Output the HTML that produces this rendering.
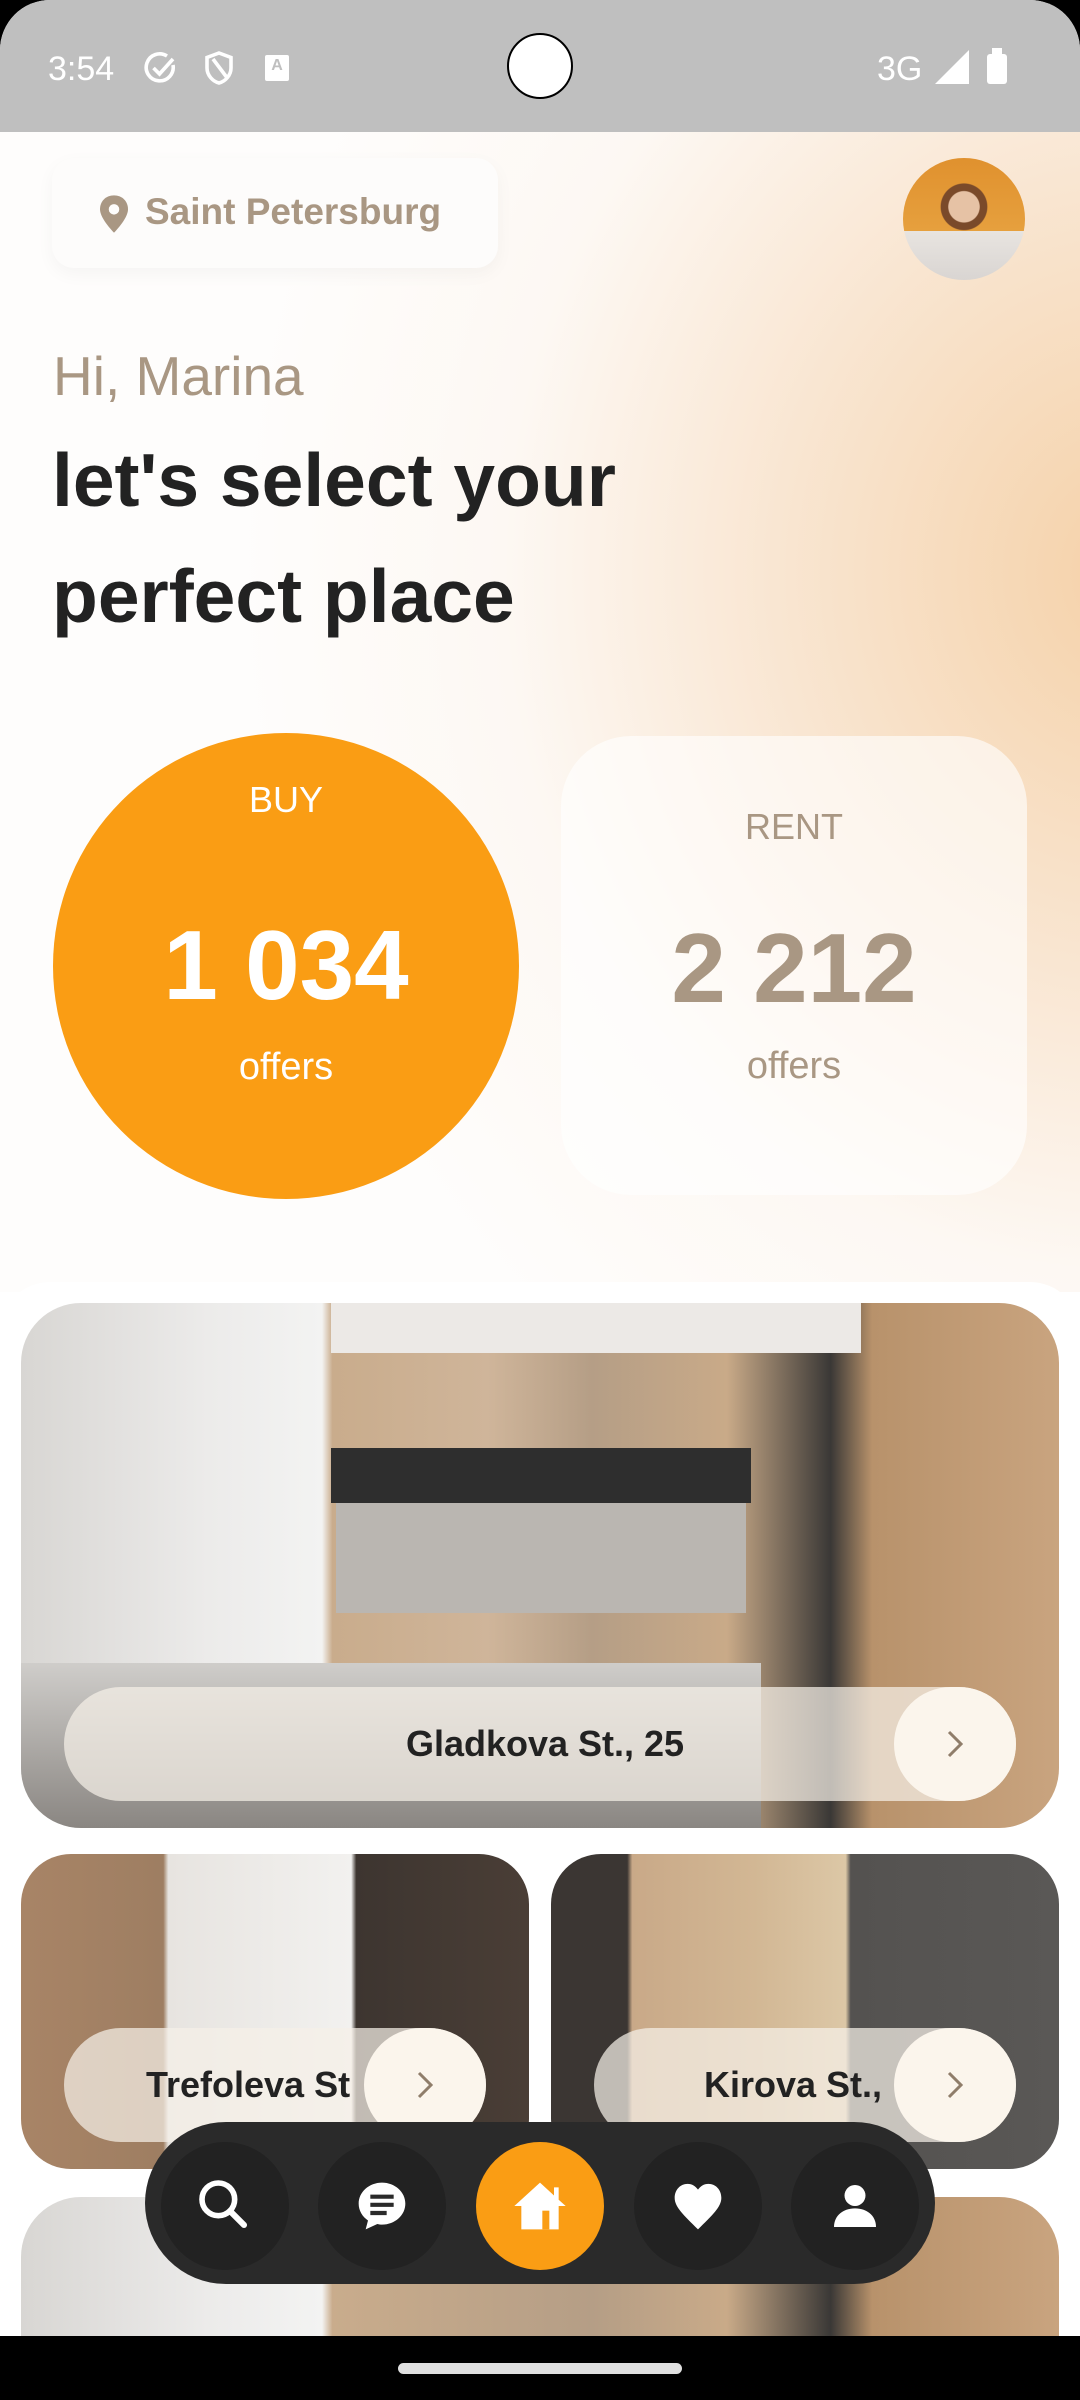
<!DOCTYPE html>
<html><head><meta charset="utf-8"><style>
*{margin:0;padding:0;box-sizing:border-box}
body{width:1080px;height:2400px;overflow:hidden;background:#000;font-family:"Liberation Sans",sans-serif;position:relative}
.screen{position:absolute;left:0;top:0;width:1080px;height:2400px;background:#fff;border-radius:50px 50px 0 0;overflow:hidden}
.status{position:absolute;left:0;top:0;width:1080px;height:132px;background:#bfbfbf;color:#fff}
.hero{position:absolute;left:0;top:132px;width:1080px;height:1160px;background:radial-gradient(ellipse 900px 1000px at 105% 38%,#f5d1a8 0,#f9e6d2 40%,#fdf8f3 70%,#fefdfc 100%)}
.abs{position:absolute}
.card{position:absolute;overflow:hidden}
.pill{position:absolute;background:rgba(245,240,232,.72);border-radius:60px}
.arrow{position:absolute;width:122px;height:114px;border-radius:57px;background:#fbf5ec}
.nb{position:absolute;width:128px;height:128px;border-radius:64px;background:#222;top:20px}
</style></head><body>
<div class="screen">
<div class="status">
 <div class="abs" style="left:48px;top:50px;font-size:34px">3:54</div>
 <svg class="abs" style="left:143px;top:50px" width="36" height="36" viewBox="0 0 24 24"><path d="M20 10a9 9 0 1 1-4-6" fill="none" stroke="#fff" stroke-width="2.4"/><path d="M7 12l4 4 9-10" fill="none" stroke="#fff" stroke-width="2.4"/></svg>
 <svg class="abs" style="left:203px;top:50px" width="32" height="36" viewBox="0 0 20 24"><path d="M10 2l8 3v7c0 5-4 9-8 10-4-1-8-5-8-10V5z M6 6l9 12" fill="none" stroke="#fff" stroke-width="2.4"/></svg>
 <div class="abs" style="left:265px;top:55px;width:24px;height:26px;background:#fff;border-radius:2px;color:#bfbfbf;font-size:16px;text-align:center;line-height:22px;font-weight:bold">A</div>
 <div class="abs" style="left:507px;top:33px;width:66px;height:66px;border-radius:50%;background:#fff;border:2px solid #000"></div>
 <div class="abs" style="left:877px;top:50px;font-size:34px">3G</div>
 <svg class="abs" style="left:935px;top:50px" width="34" height="34"><path d="M34 0V34H0z" fill="#fff"/></svg>
 <div class="abs" style="left:987px;top:54px;width:20px;height:30px;background:#fff;border-radius:3px"></div>
 <div class="abs" style="left:992px;top:48px;width:10px;height:8px;background:#fff"></div>
</div>
<div class="hero">
 <div class="abs" style="left:52px;top:26px;width:446px;height:110px;background:#fdfcfb;border-radius:22px;box-shadow:0 6px 18px rgba(0,0,0,.04)">
  <svg class="abs" style="left:48px;top:37px" width="28" height="38" viewBox="0 0 24 32"><path d="M12 0C5 0 0 5 0 12c0 8 12 20 12 20s12-12 12-20C24 5 19 0 12 0z" fill="#a99783"/><circle cx="12" cy="12" r="4.5" fill="#fdfcfb"/></svg>
  <div class="abs" style="left:93px;top:33px;font-size:37px;color:#a99783;font-weight:bold">Saint Petersburg</div>
 </div>
 <div class="abs" style="left:903px;top:26px;width:122px;height:122px;border-radius:50%;background:radial-gradient(circle at 50% 40%,#e6c2a5 0 16%,#7a4a2a 17% 24%,transparent 25%),linear-gradient(180deg,#e0912e 0,#e6a03e 60%,#e8e4e0 60%,#d9d5d2 100%)"></div>
 <div class="abs" style="left:53px;top:212px;font-size:55px;color:#a99783">Hi, Marina</div>
 <div class="abs" style="left:52px;top:290px;font-size:75px;line-height:116px;color:#222;font-weight:bold">let's select your<br>perfect place</div>
 <div class="abs" style="left:53px;top:601px;width:466px;height:466px;border-radius:50%;background:#fa9d14;color:#fff;text-align:center">
  <div style="margin-top:46px;font-size:36px">BUY</div>
  <div style="margin-top:88px;font-size:98px;font-weight:bold">1 034</div>
  <div style="margin-top:24px;font-size:38px">offers</div>
 </div>
 <div class="abs" style="left:561px;top:604px;width:466px;height:459px;border-radius:70px;background:rgba(255,255,255,.62);color:#a99783;text-align:center">
  <div style="margin-top:70px;font-size:36px">RENT</div>
  <div style="margin-top:64px;font-size:98px;font-weight:bold">2 212</div>
  <div style="margin-top:20px;font-size:38px">offers</div>
 </div>
</div>
<div class="abs" style="left:0;top:1282px;width:1080px;height:1100px;background:#fff;border-radius:50px 50px 0 0"></div>
<div class="card" style="left:21px;top:1303px;width:1038px;height:525px;border-radius:60px;background:linear-gradient(90deg,#d8d6d3 0,#ecebea 18%,#f3f3f2 29%,#c9ac8c 30%,#cfb59a 45%,#b59e86 55%,#c9aa88 68%,#3a3836 78%,#b8926b 82%,#c9a47f 100%)">
 <div class="abs" style="left:310px;top:0;width:530px;height:50px;background:#ece9e6"></div>
 <div class="abs" style="left:310px;top:145px;width:420px;height:55px;background:#2e2e2e"></div>
 <div class="abs" style="left:315px;top:200px;width:410px;height:110px;background:#bab6b1"></div>
 <div class="abs" style="left:0;top:360px;width:740px;height:165px;background:linear-gradient(180deg,#cfcdca,#8a8682)"></div>
 <div class="pill" style="left:43px;top:384px;width:952px;height:114px"></div>
 <div class="abs" style="left:43px;top:384px;width:952px;height:114px;line-height:114px;text-align:center;font-size:36px;font-weight:bold;color:#222;padding-left:10px">Gladkova St., 25</div>
 <div class="arrow" style="left:873px;top:384px"></div>
 <svg class="abs" style="left:920px;top:426px" width="28" height="30" viewBox="0 0 14 20"><path d="M3 2l8 8-8 8" fill="none" stroke="#8f7d6a" stroke-width="2"/></svg>
</div>
<div class="card" style="left:21px;top:1854px;width:508px;height:315px;border-radius:50px;background:linear-gradient(90deg,#a88466 0,#9e7e62 28%,#e7e4e0 29%,#f2f1ef 65%,#3d3530 66%,#4a3e36 100%)">
 <div class="pill" style="left:43px;top:174px;width:422px;height:114px"></div>
 <div class="abs" style="left:125px;top:174px;height:114px;line-height:114px;font-size:36px;font-weight:bold;color:#222;white-space:nowrap;width:250px;overflow:hidden">Trefoleva St</div>
 <div class="arrow" style="left:343px;top:174px"></div>
 <svg class="abs" style="left:390px;top:216px" width="28" height="30" viewBox="0 0 14 20"><path d="M3 2l8 8-8 8" fill="none" stroke="#8f7d6a" stroke-width="2"/></svg>
</div>
<div class="card" style="left:551px;top:1854px;width:508px;height:315px;border-radius:50px;background:linear-gradient(90deg,#3b3633 0,#3b3633 15%,#c9a988 16%,#d2b794 40%,#dcc7a6 58%,#545250 59%,#5a5856 100%)">
 <div class="pill" style="left:43px;top:174px;width:422px;height:114px"></div>
 <div class="abs" style="left:153px;top:174px;height:114px;line-height:114px;font-size:36px;font-weight:bold;color:#222;white-space:nowrap">Kirova St.,</div>
 <div class="arrow" style="left:343px;top:174px"></div>
 <svg class="abs" style="left:390px;top:216px" width="28" height="30" viewBox="0 0 14 20"><path d="M3 2l8 8-8 8" fill="none" stroke="#8f7d6a" stroke-width="2"/></svg>
</div>
<div class="card" style="left:21px;top:2197px;width:1038px;height:200px;border-radius:60px 60px 0 0;background:linear-gradient(90deg,#d8d6d3 0,#ecebea 18%,#f3f3f2 29%,#c9ac8c 30%,#b59e86 55%,#c9aa88 68%,#3a3836 78%,#b8926b 82%,#c9a47f 100%)"></div>
<div class="abs" style="left:145px;top:2122px;width:790px;height:162px;border-radius:81px;background:#2a2a2a">
 <div class="nb" style="left:16px"></div>
 <svg class="abs" style="left:50px;top:54px" width="56" height="56" viewBox="0 0 24 24"><circle cx="10" cy="10" r="7" fill="none" stroke="#fff" stroke-width="2.4"/><path d="M15 15l6 6" stroke="#fff" stroke-width="2.6" stroke-linecap="round"/></svg>
 <div class="nb" style="left:173px"></div>
 <svg class="abs" style="left:209px;top:56px" width="56" height="56" viewBox="0 0 24 24"><path d="M12 2C6.5 2 2 6 2 11c0 3 1.6 5.6 4 7.2L5 22l5-2.3c.7.2 1.3.3 2 .3 5.5 0 10-4 10-9S17.5 2 12 2z" fill="#fff"/><path d="M7 8h10M7 11.5h10M7 15h7" stroke="#2a2a2a" stroke-width="1.8"/></svg>
 <div class="nb" style="left:331px;background:#fa9d14"></div>
 <svg class="abs" style="left:367px;top:56px" width="56" height="56" viewBox="0 0 24 24"><path d="M12 2L1 12h3v10h16V12h3l-3-2.7V4h-2v3.5z" fill="#fff"/><rect x="13" y="14" width="3" height="8" fill="#fa9d14"/></svg>
 <div class="nb" style="left:489px"></div>
 <svg class="abs" style="left:525px;top:56px" width="56" height="56" viewBox="0 0 24 24"><path d="M12 22C6 16 2 12.5 2 8.5 2 5 4.5 2.5 7.5 2.5c2 0 3.5 1 4.5 2.5 1-1.5 2.5-2.5 4.5-2.5 3 0 5.5 2.5 5.5 6 0 4-4 7.5-10 13.5z" fill="#fff"/></svg>
 <div class="nb" style="left:646px"></div>
 <svg class="abs" style="left:682px;top:56px" width="56" height="56" viewBox="0 0 24 24"><circle cx="12" cy="7.5" r="4.5" fill="#fff"/><path d="M3 21c0-5 4-8 9-8s9 3 9 8z" fill="#fff"/></svg>
</div>
<div class="abs" style="left:0;top:2336px;width:1080px;height:64px;background:#000"></div>
<div class="abs" style="left:398px;top:2363px;width:284px;height:11px;border-radius:6px;background:#e0e0e0"></div>
</div>
</body></html>
